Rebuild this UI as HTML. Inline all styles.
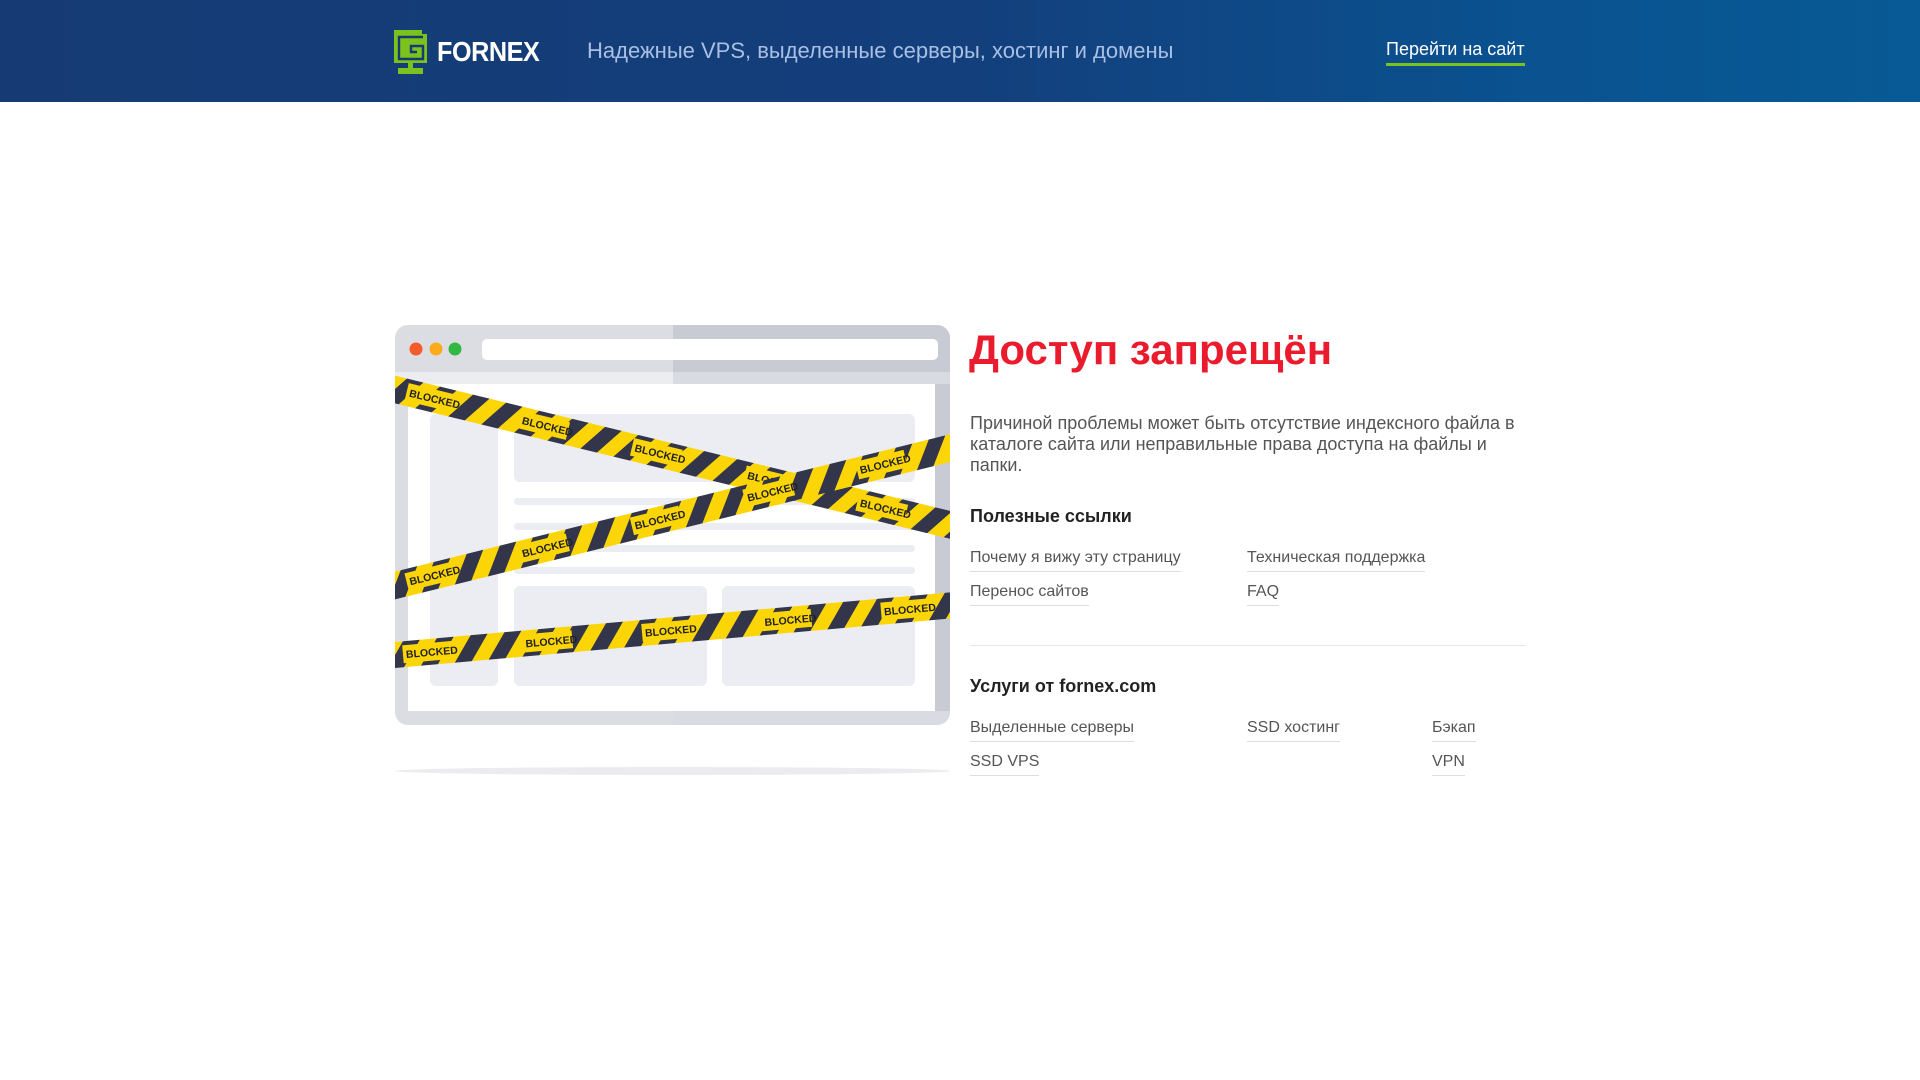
<!DOCTYPE html>
<html><head><meta charset="utf-8"><style>
*{margin:0;padding:0;box-sizing:border-box}
body{width:1920px;height:1080px;background:#fff;font-family:"Liberation Sans",Arial,sans-serif;position:relative;overflow:hidden}
.hdr{position:absolute;left:0;top:0;width:1920px;height:102px;background:linear-gradient(90deg,#163b74 0%,#133f7c 50%,#0a5290 80%,#075a95 100%)}
.abs{position:absolute;white-space:nowrap}
.tag{left:587px;top:38px;font-size:22px;color:#a9bfe3}
.go{left:1386px;top:39px;font-size:18px;color:#fff;padding-bottom:3px;border-bottom:3px solid #7cc21c}
h1{position:absolute;left:969px;top:326px;font-size:42px;font-weight:bold;color:#ea1b2d;white-space:nowrap}
.p{left:970px;top:413px;font-size:18px;line-height:21px;color:#555;width:560px;white-space:normal}
.h2{font-size:18px;font-weight:bold;color:#222}
.l{font-size:16px;color:#555;padding-bottom:4px;border-bottom:1px solid #ddd}
</style></head><body>
<div class="hdr"></div>
<svg class="abs" style="left:394px;top:30px" width="36" height="46" viewBox="0 0 36 46">
<g fill="#7cc21c"><path d="M0 0h28v4h5v29h-33z"/><rect x="14" y="33" width="5" height="6"/><rect x="4" y="38" width="25" height="6"/></g>
<g fill="none" stroke="#163b74" stroke-width="2.4"><path d="M29 7H5v22h24V16h-12v6h6"/></g>
</svg>
<div class="abs" style="left:437px;top:36px;font-size:28px;font-weight:bold;color:#fff;letter-spacing:-0.5px;transform:scaleX(0.9);transform-origin:left">FORNEX</div>
<div class="abs tag">Надежные VPS, выделенные серверы, хостинг и домены</div>
<div class="abs go">Перейти на сайт</div>

<svg class="abs" style="left:395px;top:325px" width="556" height="455" viewBox="0 0 556 455">
<defs>
<clipPath id="c"><rect x="0" y="0" width="555" height="400" rx="13"/></clipPath>
<pattern id="st" width="34" height="40" patternUnits="userSpaceOnUse" patternTransform="skewX(-35)">
<rect width="34" height="40" fill="#fcd507"/><rect width="17" height="40" fill="#33364a"/></pattern>
</defs>
<g clip-path="url(#c)">
<rect width="556" height="400" fill="#dcdde3"/>
<rect x="278" width="278" height="400" fill="#c8cbd3"/>
<rect x="0" y="47" width="278" height="12" fill="#ecedf1"/>
<rect x="278" y="47" width="278" height="12" fill="#d8dbe1"/>
<rect x="13" y="59" width="527" height="327" fill="#fff"/>
<rect x="278" y="386" width="278" height="14" fill="#d8dbe1"/>
<circle cx="21" cy="24" r="6.5" fill="#f45b2a"/><circle cx="41" cy="24" r="6.5" fill="#fbab1c"/><circle cx="60" cy="24" r="6.5" fill="#31b842"/>
<rect x="87" y="14" width="456" height="21" rx="5" fill="#fff"/>
<g fill="#ecedf2">
<rect x="35" y="89" width="68" height="272" rx="6"/>
<rect x="119" y="89" width="401" height="68" rx="6"/>
<rect x="119" y="173" width="401" height="7" rx="3.5"/>
<rect x="119" y="198" width="401" height="7" rx="3.5"/>
<rect x="119" y="220" width="401" height="7" rx="3.5"/>
<rect x="119" y="242" width="401" height="7" rx="3.5"/>
<rect x="119" y="261" width="193" height="100" rx="6"/>
<rect x="327" y="261" width="193" height="100" rx="6"/>
</g>
<g font-family="Liberation Sans,sans-serif" font-weight="bold" font-size="10.5" fill="#222">
<g transform="translate(0,64) rotate(13.7)">
<rect x="-30" y="-13" width="660" height="27" fill="url(#st)"/>
<g fill="#fcd507"><rect x="12" y="-9" width="50" height="18"/><rect x="128" y="-9" width="50" height="18"/><rect x="244" y="-9" width="50" height="18"/><rect x="360" y="-9" width="50" height="18"/><rect x="476" y="-9" width="50" height="18"/></g>
<text x="15" y="4">BLOCKED</text><text x="131" y="4">BLOCKED</text><text x="247" y="4">BLOCKED</text><text x="363" y="4">BLOCKED</text><text x="479" y="4">BLOCKED</text>
</g>
<g transform="translate(0,260) rotate(-13.9)">
<rect x="-30" y="-13" width="660" height="27" fill="url(#st)"/>
<g fill="#fcd507"><rect x="12" y="-9" width="50" height="18"/><rect x="128" y="-9" width="50" height="18"/><rect x="244" y="-9" width="50" height="18"/><rect x="360" y="-9" width="50" height="18"/><rect x="476" y="-9" width="50" height="18"/></g>
<text x="15" y="4">BLOCKED</text><text x="131" y="4">BLOCKED</text><text x="247" y="4">BLOCKED</text><text x="363" y="4">BLOCKED</text><text x="479" y="4">BLOCKED</text>
</g>
<g transform="translate(0,330) rotate(-5.1)">
<rect x="-30" y="-13" width="660" height="26" fill="url(#st)"/>
<g fill="#fcd507"><rect x="8" y="-9" width="50" height="18"/><rect x="128" y="-9" width="50" height="18"/><rect x="248" y="-9" width="50" height="18"/><rect x="368" y="-9" width="50" height="18"/><rect x="488" y="-9" width="50" height="18"/></g>
<text x="11" y="4">BLOCKED</text><text x="131" y="4">BLOCKED</text><text x="251" y="4">BLOCKED</text><text x="371" y="4">BLOCKED</text><text x="491" y="4">BLOCKED</text>
</g>
</g>
</g>
<ellipse cx="278" cy="446" rx="278" ry="4" fill="#ececef"/>
</svg>

<h1>Доступ запрещён</h1>
<div class="abs p">Причиной проблемы может быть отсутствие индексного файла в каталоге сайта или неправильные права доступа на файлы и папки.</div>
<div class="abs h2" style="left:970px;top:506px">Полезные ссылки</div>
<div class="abs l" style="left:970px;top:549px">Почему я вижу эту страницу</div>
<div class="abs l" style="left:1247px;top:549px">Техническая поддержка</div>
<div class="abs l" style="left:970px;top:583px">Перенос сайтов</div>
<div class="abs l" style="left:1247px;top:583px">FAQ</div>
<div class="abs" style="left:970px;top:645px;width:556px;height:1px;background:#e6e6e6"></div>
<div class="abs h2" style="left:970px;top:676px">Услуги от fornex.com</div>
<div class="abs l" style="left:970px;top:719px">Выделенные серверы</div>
<div class="abs l" style="left:1247px;top:719px">SSD хостинг</div>
<div class="abs l" style="left:1432px;top:719px">Бэкап</div>
<div class="abs l" style="left:970px;top:753px">SSD VPS</div>
<div class="abs l" style="left:1432px;top:753px">VPN</div>
</body></html>
